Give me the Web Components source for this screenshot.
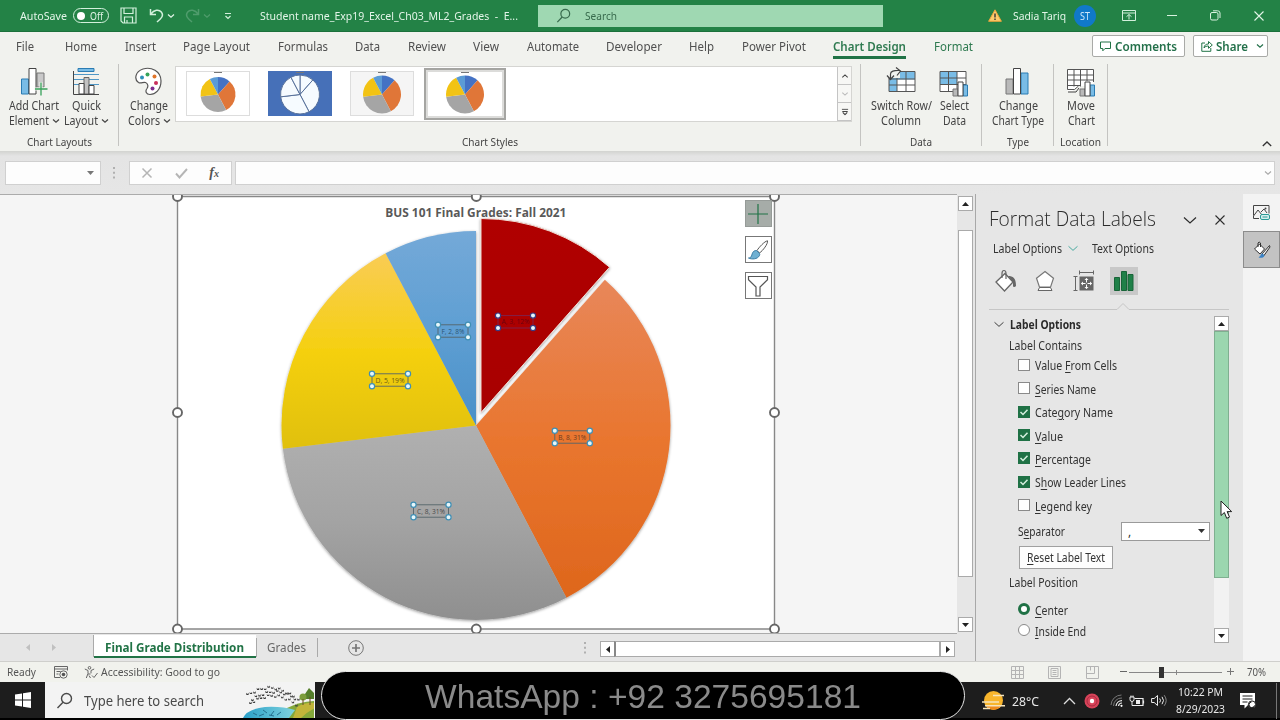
<!DOCTYPE html>
<html lang="en">
<head>
<meta charset="utf-8">
<title>Excel - Final Grade Distribution</title>
<style>
body { margin: 0; width: 1280px; height: 720px; overflow: hidden; font-family: "Noto Sans", "Open Sans", sans-serif; font-size: 12px; color: #444; }
</style>
</head>
<body>
<excel-app></excel-app>
<script>
// every element gets the same box rules, then its own template
function define(name, html, setup) {
  const template = document.createElement("template");
  template.innerHTML = `<style>:host{display:block;box-sizing:border-box} *{box-sizing:border-box}</style>` + html;
  customElements.define(name, class extends HTMLElement {
    constructor() {
      super();
      this.attachShadow({ mode: "open" });
      this.shadowRoot.appendChild(template.content.cloneNode(true));
    }
    connectedCallback() {
      if (setup) setup(this, this.shadowRoot);
    }
  });
}

const bars = `<path d="M1 12h7v15H1z" fill="#b9b9b9" stroke="#777"/><path d="M16 6h7v21h-7z" fill="#79bce6" stroke="#2b7cb3"/><path d="M8.500 1.500h7v25.500h-7z" fill="#fff" stroke="#444"/>`;
const smallBars = `<path d="M14 22h5v7h-5z" fill="#b9b9b9" stroke="#777"/><path d="M24 18h4.500v11H24z" fill="#79bce6" stroke="#2b7cb3"/><path d="M19 15h5v14h-5z" fill="#fff" stroke="#444"/>`;

// name: [width, height, markup]
const icons = {
  save: [17, 17, `<g fill="none" stroke="#d3f0dc" stroke-width="1.200"><path d="M1 1h15v15H3l-2-2z"/><path d="M4 1v5.500h9V1M4.500 16v-6h8v6M7 16v-3"/></g>`],
  undo: [15, 15, `<path d="M1.500 1v5.500H7M1.800 6.200C5 1.500 10 1.200 12.300 4c2 2.600 1 5.200-1 7L8 14" fill="none" stroke="#d3f0dc" stroke-width="1.500"/>`],
  redo: [15, 15, `<path d="M13.500 1v5.500H8M13.200 6.200C10 1.500 5 1.200 2.700 4c-2 2.600-1 5.200 1 7L7 14" fill="none" stroke="#4f9c6c" stroke-width="1.500"/>`],
  chev: [8, 6, `<path d="M1 1.500l3 2.700 3-2.700" fill="none" stroke="currentColor" stroke-width="1.200"/>`],
  custom: [8, 8, `<path d="M1 1.500h6M1.500 4l2.500 2.500L6.500 4" fill="none" stroke="#d3f0dc" stroke-width="1.200"/>`],
  search: [17, 17, `<g fill="none" stroke="currentColor" stroke-width="1.400"><circle cx="10.500" cy="6.500" r="5"/><path d="M7 10.200L1.500 16"/></g>`],
  warning: [14, 13, `<path d="M7 .8L13.400 12.300H.6z" fill="#fccb6c" stroke="#e9a33c"/><path d="M7 4.500v4M7 9.500v1.500" stroke="#333" stroke-width="1.400"/>`],
  ribbon: [14, 11, `<g fill="none" stroke="#d3f0dc"><path d="M.5 .5h13v10H.5zM.5 3h13M7 9.500V4.500M4.500 6.700L7 4.500l2.500 2.200"/></g>`],
  minimize: [10, 10, `<path d="M0 4.500h10" stroke="#d9f2e0"/>`],
  restore: [11, 11, `<g fill="none" stroke="#d9f2e0"><rect x=".5" y="2.500" width="7.500" height="7.500" rx="1.500"/><path d="M3 .8h4.500Q10 .8 10 3v5"/></g>`],
  close: [10, 10, `<path d="M.5 .5l9 9M9.500 .5l-9 9" stroke="currentColor" stroke-width="1.100"/>`],
  comment: [11, 11, `<path d="M.5 1h10v6.500H5L2.800 9.800V7.500H.5z" fill="none" stroke="#217346"/>`],
  share: [12, 12, `<path d="M4 3H.8v8.300h9V8M3 8c.3-3 2-4 4.500-4V1.500L11.300 5 7.500 8.300V6C5.500 6 4 6.500 3 8z" fill="none" stroke="#217346"/>`],
  addElement: [28, 30, `<path d="M1.500 12h7v15h-7z" fill="#79bce6" stroke="#2b7cb3"/><path d="M17 6h7v14h-7z" fill="#c9c9c9" stroke="#777"/><path d="M9 1.500h7v25.500H9z" fill="#fff" stroke="#444"/><path d="M21 15v14M14.500 22h13" stroke="#f1f2ee" stroke-width="3"/><path d="M21 15.500v13M15 22h12.500" stroke="#38a05a" stroke-width="1.300"/>`],
  quickLayout: [28, 30, `<path d="M6 1.500h16v3H6z" fill="#79bce6" stroke="#2b7cb3"/><path d="M2 7.500h25M2 12.500h25M2 17.500h25" stroke="#4f97c6"/><path d="M12 10.500h5V27h-5z" fill="#c2c2c2" stroke="#666"/><path d="M7 16.500h5V27H7zM17 18.500h5V27h-5z" fill="#fff" stroke="#444"/><path d="M1.500 4v23.500H27" fill="none" stroke="#444"/>`],
  palette: [30, 30, `<path d="M4.500 15.500C0 12.500 1 4.500 9 2c8-2.500 18 2 18 12 0 9-6 13.500-11 13.500-4 0-5-3.500-3-6 1.500-2 1-5-1.500-6-2.500-.8-4.500 1.500-7 0z" fill="#fff" stroke="#555" stroke-width="1.200"/><circle cx="8" cy="10.500" r="2" fill="#2d8fb8"/><circle cx="13.500" cy="7.500" r="2" fill="#37a35a"/><circle cx="20.500" cy="9.500" r="2" fill="#e0752a"/><circle cx="22" cy="16" r="2" fill="#c9305c"/><circle cx="18.500" cy="21.500" r="2" fill="#7d2f8f"/>`],
  switchRow: [30, 30, `<path d="M3 4.500h26v20H3z" fill="#fff"/><path d="M3 4.500h26v8H11v12H3z" fill="#79bce6"/><path d="M3 4.500h26v20H3zM11 4.500v20M20 4.500v20M3 12h26M3 18h26" fill="none" stroke="#555"/><path d="M0 0h14v11H0z" fill="#f1f2ee"/><path d="M4.500 12V7q0-4 9.500-3.500M1 8.500L4.500 12.500 8 8.500M10 .5l4.500 3.500-3.500 4.500" fill="none" stroke="#444" stroke-width="1.200"/>`],
  selectData: [30, 30, `<path d="M1 4.500h26v20H1z" fill="#fff"/><path d="M1 4.500h17v13H1z" fill="#79bce6"/><path d="M1 4.500h26v20H1zM9.500 4.500v20M18 4.500v20M1 11h26M1 17.500h26" fill="none" stroke="#555"/>` + smallBars],
  chartType: [26, 30, bars],
  moveChart: [30, 30, `<path d="M1.500 2.500h26v16.500l-16 0-5 5h-5z" fill="#fff"/><path d="M27.500 15V2.500h-26v20h7l4-3.500M8 2.500v17M14.500 2.500v17M21 2.500V14M1.500 8h26M1.500 13h26M1.500 18.500h13" fill="none" stroke="#555"/><path d="M2 25h8l3-4" fill="none" stroke="#444"/>` + smallBars],
  collapse: [10, 6, `<path d="M.8 5l4.200-4 4.200 4" fill="none" stroke="#333" stroke-width="1.300"/>`],
  cross: [12, 12, `<path d="M1.500 1.500l9 9M10.500 1.500l-9 9" stroke="#b5b5b5" stroke-width="1.500"/>`],
  check: [13, 12, `<path d="M1 6.500l3.500 4L12 2" fill="none" stroke="#b5b5b5" stroke-width="1.900"/>`],
  dots: [3, 12, `<path d="M1 0v2M1 4.700v2M1 9.500v2" stroke="#aaa" stroke-width="1.800"/>`],
  down: [7, 4, `<path d="M0 0h7L3.500 4z" fill="currentColor"/>`],
  up: [7, 4, `<path d="M0 4h7L3.500 0z" fill="currentColor"/>`],
  left: [4, 7, `<path d="M4 0v7L0 3.500z" fill="currentColor"/>`],
  right: [4, 7, `<path d="M0 0v7l4-3.500z" fill="currentColor"/>`],
  moreStyles: [8, 8, `<path d="M.5 1h7M1 3.500h6M1.500 4.500l2.500 2.500 2.500-2.500" fill="none" stroke="#444" stroke-width="1.200"/>`],
  wideChev: [14, 9, `<path d="M1 1.500l6 5.500 6-5.500" fill="none" stroke="currentColor" stroke-width="1.200"/>`],
  fill: [24, 24, `<path d="M2 13l9-8.500 8 8.500-8.500 9z" fill="#fff" stroke="#666" stroke-width="1.300"/><path d="M8 9V4.500q0-3 2-3t2 3V10" fill="none" stroke="#666" stroke-width="1.200"/><path d="M14 7c5 0 8 2 8 10-1.500 2-3 1-3-.5V13z" fill="#666"/>`],
  effects: [22, 24, `<path d="M11 2.500l8.500 6.700-3 9H5.500l-3-9z" fill="#fff" stroke="#777" stroke-width="1.200"/><path d="M5.500 18.500h11L18 21.500H4z" fill="#fff" stroke="#666"/>`],
  size: [22, 22, `<path d="M2.500 6v15M.5 6.500h4M.5 20.500h4M7 2.500h13M6.500.5v4M20.500.5v4" fill="none" stroke="#666"/><path d="M6.500 6.500h14v14h-14z" fill="#666"/><path d="M13.500 8.500v10M8.500 13.500h10" stroke="#fff" stroke-dasharray="4 2"/><path d="M11.500 10l2-2 2 2zM11.500 17l2 2 2-2zM10 11.500l-2 2 2 2zM17 11.500l2 2-2 2z" fill="#fff"/>`],
  barsGreen: [20, 22, `<path d="M.5 7.500h5v13h-5zM7.500 1.500h5v19h-5zM14 4.500h5v16h-5z" fill="#1f8048" stroke="#186438"/>`],
  altText: [18, 16, `<path d="M.5 10.500v-10h15.500v8M.5 11L5 5l4 5M.5 11v2.500H6M8 7l3-3 3 4" fill="none" stroke="#444"/><circle cx="12.500" cy="3.500" r="1" fill="#444"/><rect x="7.500" y="9.500" width="9" height="5" rx="1.500" fill="#d8f0ee" stroke="#2a9a96"/><path d="M9.500 12h5" stroke="#2a9a96"/>`],
  paintFormat: [18, 18, `<path d="M1.500 8l5-5 5 5-4.500 5z" fill="#fff" stroke="#333"/><path d="M5 6V2q1-2 2.500 0v4" fill="none" stroke="#333"/><path d="M16.500 4.500L9 13l1.800 1.800L17 6z" fill="#eee" stroke="#333"/><path d="M9.500 12.500c-2 0-1.500 2.500-4 4 3.500.8 5.500 0 6-2.300z" fill="#3c82c4"/>`],
  plus: [20, 20, `<path d="M10 0v20M0 10h20" stroke="#217346" stroke-width="1.200"/>`],
  brush: [22, 20, `<path d="M20.500.8c-3 .5-8.500 6.500-10.500 9.700l2.500 2.500c3.500-2.500 8.500-9 8-12.200z" fill="#fff" stroke="#555"/><path d="M9.500 10.500c-4 0-4 3-5 5.500-.5 1.500-2 2-3 2 3 1.500 9 1.500 11-2.500.5-1.200.2-2-.5-2.700z" fill="#6fb0d2" stroke="#3a7ca5"/>`],
  funnel: [22, 22, `<path d="M1.500 1.500h19v3.300L13 12v9H9v-9L1.500 4.800z" fill="#fff" stroke="#555" stroke-width="1.200"/>`],
  addSheet: [16, 16, `<g fill="none" stroke="#777"><circle cx="8" cy="8" r="7.300"/><path d="M8 4v8M4 8h8" stroke-width="1.700"/></g>`],
  macro: [15, 13, `<g fill="none" stroke="#666"><path d="M.5 11.500V.5h13v4M.5 3h13M2.500 5.500h4M2.500 8h2M.5 11.500H6"/><circle cx="9.500" cy="8.500" r="3.700"/></g><circle cx="9.500" cy="8.500" r="1.800" fill="#555"/>`],
  access: [14, 13, `<g fill="none" stroke="#666"><circle cx="5.500" cy="1.800" r="1.300"/><path d="M.8 3l3.200 1.500v3L2.300 12M10.200 3L7 4.500v2.800M4 8l2.500 0M6.500 12L5 9.500M8 9.500l2 2 3.500-4.500"/></g>`],
  gridView: [13, 13, `<path d="M.5 .5h12v12H.5zM4.500 .5v12M8.500 .5v12M.5 4.500h12M.5 8.500h12" fill="none" stroke="#b4b4b4"/>`],
  pageView: [13, 13, `<path d="M.5 .5h12v12H.5zM3 2.500h7v8H3zM4.500 4.500h4M4.500 6.500h4M4.500 8.500h4" fill="none" stroke="#b4b4b4"/>`],
  breakView: [13, 13, `<path d="M.5 .5h12v12H.5zM.5 7.500h8v-7M4.500 .5v4" fill="none" stroke="#b4b4b4"/>`],
  windows: [16, 16, `<path d="M0 2.500L7 1.500V7.500H0zM8 1.300L16 0v7.500H8zM0 8.500h7v6l-7-1zM8 8.500h8V16l-8-1.300z" fill="#fff"/>`],
  weather: [24, 22, `<circle cx="12.500" cy="10.500" r="9.500" fill="#f8b52c"/><path d="M5 16a9.500 9.500 0 0 0 15 0z" fill="#ee8a1d"/><path d="M1 12h17M4 15.700h20M12 5.500h11M2 18.500h7" stroke="#f5e4bd" stroke-width="1.500"/>`],
  caret: [13, 8, `<path d="M1 7l5.500-5.500L12 7" fill="none" stroke="#ddd" stroke-width="1.300"/>`],
  record: [16, 16, `<circle cx="8" cy="8" r="7.500" fill="#d8445a"/><circle cx="8" cy="8" r="5" fill="none" stroke="#a82a40"/><circle cx="8" cy="8" r="2.200" fill="#fff"/>`],
  wifi: [13, 13, `<g fill="none"><path d="M1 11A10.500 10.500 0 0 1 11.500 1M3.500 12A8 8 0 0 1 12 4" stroke="#777"/><path d="M6 12a6 6 0 0 1 6-5.300M8.500 12a3.500 3.500 0 0 1 3.500-3" stroke="#eee" stroke-width="1.200"/></g><circle cx="11.500" cy="11.800" r="1.100" fill="#fff"/>`],
  battery: [16, 12, `<path d="M5.500 3.500h8.500v7H4M14.500 5.500v3" fill="none" stroke="#eee" stroke-width="1.200"/><path d="M7 5h4v4H7z" fill="#eee"/><path d="M1 2v2.500q0 2 2 2t2-2V2zM2 .5V2M4 .5V2M3 6.500v4h2" fill="none" stroke="#eee"/>`],
  speaker: [16, 13, `<path d="M.6 4.500h2.600L6.500 1.500v10L3.200 8.500H.6z" fill="none" stroke="#eee"/><path d="M8.700 4.500q1.600 2 0 4M11 2.800q3 3.700 0 7.400" fill="none" stroke="#eee"/><path d="M13.200 1.200q4 5.300 0 10.600" fill="none" stroke="#888"/>`],
  notify: [16, 16, `<path d="M0 0h15v12h-7l-3.500 3.500V12H0z" fill="#fff"/><path d="M2.500 3h10M2.500 6h10M2.500 9h5" stroke="#1d1d1d"/><circle cx="12" cy="11.500" r="3.600" fill="#fff" stroke="#1d1d1d"/><path d="M11.500 9a2.800 2.800 0 1 0 3 3.500" fill="none" stroke="#1d1d1d"/>`],
  cursor: [13, 20, `<path d="M1 1v14.500l3.400-3 2.300 5.800 2.800-1.200-2.400-5.500h4.600z" fill="#fff" stroke="#222"/>`],
  birds: [71, 36, ""]
};
// birds over a lake
{
  let flock = "";
  for (let i = 0; i < 42; i++) {
    const t = (i % 14) / 13, row = Math.floor(i / 14);
    const x = 3 + t * 46 + (row * 5) % 7, y = 13 - Math.sin(t * 2.6 + .2) * 11 + row * 4 + t * 3 + (i % 3);
    flock += `<path d="M${x.toFixed(1)} ${y.toFixed(1)}l1.300 1.300 1.300-1.300v2.200h-2.200z" fill="#3b3b3b"/>`;
  }
  icons.birds[2] = `<defs><linearGradient id="lake"><stop offset="0" stop-color="#2a9fc8"/><stop offset="1" stop-color="#7fd3de"/></linearGradient></defs>
    <path d="M44 26q12-6 28-7v17H40z" fill="#84a83a"/><path d="M54 25q9-5 18-4v5q-8 4-14 10h-8z" fill="#c2b53a"/>
    <path d="M0 36q4-9 22-11 16-1 30 3l-6 8z" fill="url(#lake)"/><path d="M10 31l4 2M20 28l4 3M31 29l-3 4M38 30l-4 3M16 34l5-2M26 33l5 1" stroke="#26718f"/>
    <path d="M66 6l5 5v6h-9v-5z" fill="#557f2b"/><circle cx="60" cy="15" r="3.500" fill="#7d9d3c"/><path d="M67 15v8M60 17v6" stroke="#6b4a24"/>${flock}`;
}

define("ui-icon", `<style>:host{display:inline-block;line-height:0;flex:none} svg{display:block}</style><span></span>`, (el, root) => {
  const [w, h, body] = icons[el.getAttribute("name")];
  root.querySelector("span").innerHTML = `<svg width="${w}" height="${h}" viewBox="0 0 ${w} ${h}">${body}</svg>`;
});

define("title-bar", `
<style>
:host { height: 32px; background: #238246; color: #e3f5e8; font-size: 11.500px; border-bottom: 1px solid #1c713b; }
.bar { display: grid; height: 31px; align-items: center; justify-items: start;
  grid-template-columns: 53px 47px 29px 18px 18px 18px 21px 36px 278px 450px 25px 61px 48px 45px 43px 44px 20px; padding-left: 20px; }
.toggle { width: 36px; height: 15px; border: 1px solid #d3f0dc; border-radius: 8px; display: flex; align-items: center; justify-content: space-between; padding: 0 5px 0 3px; font-size: 10px; }
.toggle i { width: 8px; height: 8px; border-radius: 50%; background: #fff; }
.search { width: 345px; height: 22px; background: #9fd8b2; color: #386b4d; display: flex; align-items: center; gap: 13px; padding-left: 17px; }
.search ui-icon { scale: .88; }
.st { width: 22px; height: 22px; border-radius: 50%; background: #1079c9; color: #cfe8fb; display: grid; place-items: center; font-size: 10px; }
.dim { color: #4f9c6c; }
</style>
<div class="bar">
  <ui-text w="47">AutoSave</ui-text>
  <div class="toggle"><i></i><ui-text w="13">Off</ui-text></div>
  <ui-icon name="save"></ui-icon>
  <ui-icon name="undo"></ui-icon><ui-icon name="chev"></ui-icon>
  <ui-icon name="redo"></ui-icon><ui-icon name="chev" class="dim"></ui-icon>
  <ui-icon name="custom"></ui-icon>
  <ui-text w="258">Student name_Exp19_Excel_Ch03_ML2_Grades&nbsp; - &nbsp;E...</ui-text>
  <div class="search"><ui-icon name="search"></ui-icon><ui-text w="32">Search</ui-text></div>
  <ui-icon name="warning"></ui-icon>
  <ui-text w="53">Sadia Tariq</ui-text>
  <div class="st"><ui-text w="10">ST</ui-text></div>
  <ui-icon name="ribbon"></ui-icon><ui-icon name="minimize"></ui-icon><ui-icon name="restore"></ui-icon><ui-icon name="close"></ui-icon>
</div>`);

define("ribbon-tabs", `
<style>
:host { height: 31px; display: flex; align-items: flex-start; justify-content: space-between; padding: 3px 12px 0 16px; color: #505050; }
nav { display: flex; gap: 27.400px; height: 26px; padding-top: 3px; }
.green { color: #2f7a50; }
.active { font-weight: 600; border-bottom: 3px solid #217346; height: 21px; }
.right { display: flex; gap: 8px; color: #23704a; font-weight: 600; font-size: 12px; }
.right div { height: 22px; background: #fff; border: 1px solid #a9aaa7; border-radius: 2px; display: flex; align-items: center; padding-left: 7px; gap: 4px; }
.c { width: 93px; } .s { width: 75px; }
.s ui-text { margin-left: -1px; }
.s ui-icon:last-child { margin-left: 4px; }
</style>
<nav>
  <ui-text w="18" style="margin-right:4px">File</ui-text><ui-text w="32">Home</ui-text><ui-text w="31">Insert</ui-text><ui-text w="67" style="margin-right:.5px">Page Layout</ui-text>
  <ui-text w="50">Formulas</ui-text><ui-text w="25">Data</ui-text><ui-text w="38">Review</ui-text><ui-text w="26">View</ui-text>
  <ui-text w="52">Automate</ui-text><ui-text w="56">Developer</ui-text><ui-text w="25">Help</ui-text><ui-text w="64">Power Pivot</ui-text>
  <ui-text w="73" class="green active">Chart Design</ui-text><ui-text w="39" class="green">Format</ui-text>
</nav>
<div class="right">
  <div class="c"><ui-icon name="comment"></ui-icon><ui-text w="62">Comments</ui-text></div>
  <div class="s"><ui-icon name="share"></ui-icon><ui-text w="32">Share</ui-text><ui-icon name="chev"></ui-icon></div>
</div>`);

define("ribbon-group", `
<style>
:host { position: relative; height: 82px; border-right: 1px solid #c4c4c1; display: flex; flex-direction: column; justify-content: space-between; }
.items { display: flex; }
.name { font-size: 11px; text-align: center; line-height: 14px; margin-bottom: -3px; height: 14px; }
</style>
<div class="items"><slot></slot></div><div class="name"><slot name="label"></slot></div>`);

define("ribbon-button", `
<style>
:host { display: flex; flex-direction: column; align-items: center; line-height: 15px; padding-top: 3px; }
.icon { height: 31px; }
.line { display: flex; align-items: center; gap: 3px; height: 15px; white-space: nowrap; }
</style>
<div class="icon"></div><div class="line"><slot name="a"></slot></div><div class="line"><slot name="b"></slot></div>`, (el, root) => {
  root.querySelector(".icon").innerHTML = `<ui-icon name="${el.getAttribute("icon")}"></ui-icon>`;
  if (el.hasAttribute("menu")) root.querySelectorAll(".line")[1].insertAdjacentHTML("beforeend", `<ui-icon name="chev"></ui-icon>`);
});

function slicePath(cx, cy, r, from, to) {
  const point = (deg) => {
    const a = deg * Math.PI / 180;
    return (cx + r * Math.sin(a)).toFixed(2) + " " + (cy - r * Math.cos(a)).toFixed(2);
  };
  return `M${cx} ${cy}L${point(from)}A${r} ${r} 0 0 1 ${point(to)}Z`;
}
const angles = [0, 41.500, 152.300, 263.100, 332.300, 360];

define("style-thumb", `
<style>
:host { width: 64px; height: 45px; border: 1px solid #ddd; background: #fff; line-height: 0; }
:host([kind="blue"]) { background: #4670b8; border-color: #4670b8; }
:host([kind="gray"]) { background: #f5f5f5; }
:host([selected]) { width: 82px; height: 52px; border: 2px solid #a5a5a2; padding: 2px 8px; background: #fff; box-shadow: inset 0 0 0 2px #dcdcda; }
</style><div></div>`, (el, root) => {
  const blue = el.getAttribute("kind") === "blue";
  const colors = ["#4472c4", "#e07638", "#a5a5a5", "#f2c314", "#5b9bd5"];
  const r = blue ? 19.500 : el.getAttribute("kind") === "plain" ? 17.500 : 19;
  let parts = "";
  for (let i = 0; i < 5; i++)
    parts += `<path d="${slicePath(31, 22.500, r, angles[i], angles[i + 1])}" fill="${blue ? "#f6fbff" : colors[i]}" ${blue ? 'stroke="#58719a"' : ""}/>`;
  root.querySelector("div").innerHTML = `<svg width="62" height="43" viewBox="0 0 62 43"><path d="M27 .5h8" stroke="#777"/>${parts}</svg>`;
});

define("ribbon-body", `
<style>
:host { height: 88px; display: grid; grid-template-columns: 119px 742px 121px 72px 54px 1fr; padding-top: 1px; }
.gallery { display: flex; margin-left: 3px; margin-top: 2px; width: 677px; height: 56px; background: #fff; border: 1px solid #d5d5d2; padding-left: 10px; }
.gallery style-thumb { margin: 4px 18px 0 0; flex: none; }
.gallery style-thumb[selected] { margin: 1px 0 0 -8px; }
.gallery .steps { margin-left: auto; width: 14px; display: grid; grid-template-rows: 18px 18px 18px; border-left: 1px solid #c4c4c4; color: #444; }
.steps div { display: grid; place-items: center; border-bottom: 1px solid #c4c4c4; background: #f7f7f5; }
.steps ui-icon { scale: .9; }
.flip { transform: rotate(180deg); }
.end { display: flex; justify-content: flex-end; align-items: flex-end; padding: 0 8px 4px 0; }
</style>
<ribbon-group>
  <ribbon-button icon="addElement" menu style="width:50px;margin-left:9px"><ui-text slot="a" w="50">Add Chart</ui-text><ui-text slot="b" w="40">Element</ui-text></ribbon-button>
  <ribbon-button icon="quickLayout" menu style="width:46px;margin-left:4px"><ui-text slot="a" w="29">Quick</ui-text><ui-text slot="b" w="34">Layout</ui-text></ribbon-button>
  <ui-text slot="label" w="65">Chart Layouts</ui-text>
</ribbon-group>
<ribbon-group>
  <ribbon-button icon="palette" menu style="width:46px;margin-left:7px"><ui-text slot="a" w="38">Change</ui-text><ui-text slot="b" w="32">Colors</ui-text></ribbon-button>
  <div class="gallery">
    <style-thumb kind="plain"></style-thumb><style-thumb kind="blue"></style-thumb><style-thumb kind="gray"></style-thumb><style-thumb selected></style-thumb>
    <div class="steps"><div><ui-icon name="chev" class="flip"></ui-icon></div><div style="color:#bbb"><ui-icon name="chev"></ui-icon></div><div><ui-icon name="moreStyles"></ui-icon></div></div>
  </div>
  <ui-text slot="label" w="56">Chart Styles</ui-text>
</ribbon-group>
<ribbon-group>
  <ribbon-button icon="switchRow" style="width:62px;margin-left:9px"><ui-text slot="a" w="61">Switch Row/</ui-text><ui-text slot="b" w="40">Column</ui-text></ribbon-button>
  <ribbon-button icon="selectData" style="width:30px;margin-left:7px"><ui-text slot="a" w="29">Select</ui-text><ui-text slot="b" w="23">Data</ui-text></ribbon-button>
  <ui-text slot="label" w="22">Data</ui-text>
</ribbon-group>
<ribbon-group>
  <ribbon-button icon="chartType" style="width:54px;margin-left:9px"><ui-text slot="a" w="39">Change</ui-text><ui-text slot="b" w="52">Chart Type</ui-text></ribbon-button>
  <ui-text slot="label" w="22">Type</ui-text>
</ribbon-group>
<ribbon-group>
  <ribbon-button icon="moveChart" style="width:30px;margin-left:12px"><ui-text slot="a" w="28">Move</ui-text><ui-text slot="b" w="27">Chart</ui-text></ribbon-button>
  <ui-text slot="label" w="41">Location</ui-text>
</ribbon-group>
<div class="end"><ui-icon name="collapse"></ui-icon></div>`);

define("formula-bar", `
<style>
:host { height: 43px; background: linear-gradient(#d2d3d0, #e4e4e4 5px, #e6e6e6); display: flex; align-items: flex-start; padding: 10px 5px 0; }
.box { height: 24px; background: #fdfdfd; border: 1px solid #d0d0d0; display: flex; align-items: center; justify-content: flex-end; }
.name { width: 96px; padding-right: 6px; color: #777; }
.dots { margin: 6px 13px 0 12px; }
.fx { width: 103px; justify-content: space-between; padding: 0 12px 0 11px; }
.fx i { font: italic bold 14px "Liberation Serif", serif; color: #555; }
.fx small { font-size: 10px; }
.input { flex: 1; margin-left: 3px; padding-right: 2px; color: #aaa; }
</style>
<div class="box name"><ui-icon name="down"></ui-icon></div>
<ui-icon class="dots" name="dots"></ui-icon>
<div class="box fx"><ui-icon name="cross"></ui-icon><ui-icon name="check"></ui-icon><i>f<small>x</small></i></div>
<div class="box input"><ui-icon name="chev"></ui-icon></div>`);

define("grade-chart", `
<style>
:host { position: relative; background: #f5f5f5; width: 957px; height: 440px; overflow: hidden; border-top: 1px solid #ababab; border-bottom: 1px solid #ababab; }
svg.plot { display: block; }
text { font-family: "Open Sans", "Noto Sans", sans-serif; }
.tools { position: absolute; left: 744.500px; top: 5px; display: flex; flex-direction: column; gap: 9px; }
.tools div { width: 27px; height: 27px; border: 1px solid #777; background: #fff; display: grid; place-items: center; }
.tools div:first-child { background: #a6aca8; border-color: #969b98; }
</style>
<svg class="plot" width="957" height="439" viewBox="0 195 957 439"></svg>
<div class="tools"><div><ui-icon name="plus"></ui-icon></div><div><ui-icon name="brush"></ui-icon></div><div><ui-icon name="funnel"></ui-icon></div></div>`, (el, root) => {
  const grads = [["a", "#b00000", "#a80000"], ["b", "#e8875a", "#de661c"], ["c", "#b0b0b0", "#8f8f8f"], ["d", "#f9cc55", "#e0c010"], ["f", "#74a9d8", "#4a90c8"]];
  let svg = `<defs>`;
  for (const [id, top, bottom] of grads)
    svg += `<linearGradient id="${id}" x1="0" y1="0" x2="0" y2="1"><stop offset="0" stop-color="${top}"/><stop offset=".5" stop-color="${{ a: "#ac0000", b: "#e9762f", c: "#a3a3a3", d: "#f5d010", f: "#5f9fd3" }[id]}"/><stop offset="1" stop-color="${bottom}"/></linearGradient>`;
  svg += `<filter id="shade" x="-10%" y="-10%" width="120%" height="120%"><feDropShadow dx="0" dy="1" stdDeviation="1.600" flood-color="#000" flood-opacity=".4"/></filter></defs>`;
  svg += `<path d="M177.500 196.500h597V629h-597z" fill="#fff" stroke="#888" stroke-width="1.400"/>`;
  svg += `<text x="475.800" y="217" font-size="12" font-weight="700" fill="#595959" text-anchor="middle" textLength="181" lengthAdjust="spacingAndGlyphs">BUS 101 Final Grades: Fall 2021</text>`;
  svg += `<g filter="url(#shade)">`;
  for (let i = 1; i < 5; i++)
    svg += `<path d="${slicePath(476, 425.500, 194.500, angles[i], angles[i + 1])}" fill="url(#${grads[i][0]})"/>`;
  svg += `</g><path filter="url(#shade)" d="${slicePath(481, 412.500, 194, 0, 41.500)}" fill="url(#a)" stroke="#f0dcd2" stroke-width="1"/>`;
  const labels = [["F, 2, 8%", 453, 331, 30, "#2c5673"], ["A, 3, 12%", 515.500, 321.800, 35, "#6c0010"], ["D, 5, 19%", 390, 380, 36, "#6b5a14"], ["B, 8, 31%", 572.300, 437, 35, "#6e3b20"], ["C, 8, 31%", 431, 511, 35, "#4a4a4a"]];
  for (const [text, x, y, w, color] of labels) {
    const red = text[0] === "A";
    const l = x - w / 2, t = y - 6.200;
    svg += `<rect x="${l}" y="${t}" width="${w}" height="12.400" fill="none" stroke="${red ? "#7d2450" : "#55656a"}" stroke-width=".9"/>`;
    svg += `<text x="${x}" y="${y + 2.600}" font-size="6.800" fill="${color}" text-anchor="middle" textLength="${w - 7}" lengthAdjust="spacingAndGlyphs">${text}</text>`;
    for (const px of [l, l + w]) for (const py of [t, t + 12.400])
      svg += `<circle cx="${px}" cy="${py}" r="2.600" fill="#e6f7fb" stroke="${red ? "#3a3a80" : "#3f8fb5"}" stroke-width="1.200"/>`;
  }
  for (const [x, y] of [[177.500, 196.500], [476.300, 196.500], [774.500, 196.500], [177.500, 412.500], [774.500, 412.500], [177.500, 629], [476.300, 629], [774.500, 629]])
    svg += `<circle cx="${x}" cy="${y}" r="4.500" fill="#fff" stroke="#666" stroke-width="1.900"/>`;
  root.querySelector(".plot").innerHTML = svg;
});

define("scroll-bar", `
<style>
:host { display: flex; flex-direction: column; width: 15px; color: #222; }
:host([horizontal]) { flex-direction: row; width: 355px; height: 16px; }
.btn { width: 15px; height: 15px; border: 1px solid #aaa; background: #fff; display: grid; place-items: center; flex: none; }
:host([horizontal]) .btn { height: 16px; }
.thumb { flex: none; background: var(--thumb, #fff); border: 1px solid var(--edge, #aaa); height: var(--size); margin-top: var(--start, 0); }
:host([horizontal]) .thumb { height: 16px; flex: 1; margin: 0 0 0 -1px; border-left: 2px solid #888; }
.rest { flex: 1; background: var(--track, transparent); }
:host([horizontal]) .rest { display: none; }
</style>
<div class="btn"><ui-icon id="first" name="up"></ui-icon></div><div class="thumb"></div><div class="rest"></div><div class="btn"><ui-icon id="last" name="down"></ui-icon></div>`, (el, root) => {
  if (el.hasAttribute("horizontal")) {
    root.querySelectorAll(".btn")[0].innerHTML = `<ui-icon name="left"></ui-icon>`;
    root.querySelectorAll(".btn")[1].innerHTML = `<ui-icon name="right"></ui-icon>`;
  }
});

define("sheet-tabs", `
<style>
:host { height: 26px; display: flex; align-items: flex-start; background: #e6e6e6; color: #666; font-size: 13px; }
.nav { width: 94px; height: 22px; display: flex; gap: 22px; align-items: center; padding: 3px 0 0 26px; color: #c0c0c0; border-right: 1px solid #aaa; }
.active { width: 162px; height: 23px; background: #fff; border-bottom: 2px solid #217346; color: #217346; font-weight: 700; display: flex; justify-content: center; align-items: center; padding: 2px 2px 0 0; }
.tab { width: 62px; height: 19px; margin-top: 3px; padding: 0 0 2px 10px; border-left: 1px solid #aaa; border-right: 1px solid #aaa; display: flex; align-items: center; }
</style>
<div class="nav"><ui-icon name="left"></ui-icon><ui-icon name="right"></ui-icon></div>
<div class="active"><ui-text w="139">Final Grade Distribution</ui-text></div>
<div class="tab"><ui-text w="39">Grades</ui-text></div>
<ui-icon name="addSheet" style="margin:5px 0 0 30px"></ui-icon>
<ui-icon name="dots" style="margin:7px 0 0 220px"></ui-icon>
<scroll-bar horizontal style="margin:6px 0 0 13px"></scroll-bar>`);

define("check-row", `
<style>
:host { height: 23.450px; display: flex; align-items: center; gap: 5px; padding-left: 29px; }
i { width: 12px; height: 12px; border: 1px solid #8a8a8a; background: #fff; margin-bottom: 2px; line-height: 0; }
:host([checked]) i { background: #1f7145; border-color: #1f7145; }
:host(:not([checked])) svg { display: none; }
:host([radio]) i { border-radius: 50%; }
:host([radio][checked]) i { background: #fff; border: 3.500px solid #1f7145; }
:host([radio]) svg { display: none; }
</style>
<i><svg width="10" height="10" viewBox="0 0 10 10"><path d="M1.500 5l2.500 2.500L8.500 2.700" fill="none" stroke="#d5f0de" stroke-width="1.500"/></svg></i><slot></slot>`);

define("format-pane", `
<style>
:host { width: 268px; height: 467px; background: #e6e6e6; border-left: 1px solid #a8a8a8; padding: 0 14px 0 13px; overflow: hidden; color: #333; font-size: 12px; }
.head { display: flex; align-items: center; height: 49px; font: 300 20px "Open Sans", "Noto Sans", sans-serif; color: #2c2c2c; }
.head ui-icon:nth-of-type(1) { margin: 4px 0 0 27px; } .head ui-icon:nth-of-type(2) { margin: 3px 0 0 18px; }
.modes { display: flex; align-items: center; height: 11px; padding-left: 4px; }
.kinds { display: flex; align-items: center; height: 30px; margin-top: 12px; padding-left: 5px; }
.on { width: 28px; height: 28px; background: #c8c8c8; display: grid; place-items: center; margin-left: 15px; }
.rule { display: block; margin-top: 4px; }
.body { display: flex; justify-content: space-between; height: 327px; margin-top: 4px; }
.sec { font-weight: 700; display: flex; gap: 6px; align-items: center; height: 16px; padding-left: 6px; color: #2b2b2b; }
.sub { padding-left: 20px; height: 16px; display: flex; align-items: center; }
.sep { display: flex; justify-content: space-between; align-items: center; width: 221px; padding-left: 29px; height: 18px; margin-top: 4px; }
.combo { width: 89px; height: 19px; background: #fff; border: 1px solid #9a9a9a; display: flex; justify-content: space-between; align-items: center; padding: 0 4px 0 6px; }
button { display: block; font: inherit; color: inherit; margin: 6px 0 0 30px; width: 94px; height: 23px; border: 1px solid #a0a0a0; background: #fdfdfd; padding: 0 7px; text-align: left; }
</style>
<div class="head"><ui-text w="167">Format Data Labels</ui-text><ui-icon name="wideChev"></ui-icon><ui-icon name="close"></ui-icon></div>
<div class="modes"><ui-text w="69">Label Options</ui-text><ui-icon name="wideChev" style="color:#35a397;scale:.75;margin:0 12px 0 4px"></ui-icon><ui-text w="62">Text Options</ui-text></div>
<div class="kinds"><ui-icon name="fill"></ui-icon><ui-icon name="effects" style="margin-left:16px"></ui-icon><ui-icon name="size" style="margin-left:17px"></ui-icon><div class="on"><ui-icon name="barsGreen"></ui-icon></div></div>
<svg class="rule" width="240" height="12" viewBox="0 0 240 12"><path d="M0 9.500h128l6-6 6 6h100" fill="none" stroke="#c6c6c6"/></svg>
<div class="body">
  <div>
    <div class="sec"><ui-icon name="wideChev" style="scale:.75;margin:0 -2px 0 -3px"></ui-icon><ui-text w="71">Label Options</ui-text></div>
    <div class="sub" style="margin:5px 0 1px"><ui-text w="73">Label Contains</ui-text></div>
    <check-row><ui-text w="82">Value <u>F</u>rom Cells</ui-text></check-row>
    <check-row><ui-text w="61"><u>S</u>eries Name</ui-text></check-row>
    <check-row checked><ui-text w="78">Cate<u>g</u>ory Name</ui-text></check-row>
    <check-row checked><ui-text w="28"><u>V</u>alue</ui-text></check-row>
    <check-row checked><ui-text w="56"><u>P</u>ercentage</ui-text></check-row>
    <check-row checked><ui-text w="91">S<u>h</u>ow Leader Lines</ui-text></check-row>
    <check-row><ui-text w="57"><u>L</u>egend key</ui-text></check-row>
    <div class="sep"><ui-text w="47">S<u>e</u>parator</ui-text><div class="combo"><ui-text>,</ui-text><ui-icon name="down"></ui-icon></div></div>
    <button><ui-text w="78"><u>R</u>eset Label Text</ui-text></button>
    <div class="sub" style="margin:5px 0 9px"><ui-text w="69">Label Position</ui-text></div>
    <check-row radio checked style="height:22px"><ui-text w="33"><u>C</u>enter</ui-text></check-row>
    <check-row radio style="height:20px"><ui-text w="51"><u>I</u>nside End</ui-text></check-row>
  </div>
  <scroll-bar style="--thumb:#9bd6af;--edge:#7faf90;--size:247px;--track:#f2f2f2"></scroll-bar>
</div>`);

define("side-rail", `
<style>
:host { background: #f3f3f3; height: 467px; width: 37px; }
div { height: 37px; display: grid; place-items: center; }
.on { background: #c3c3c3; border: 1px solid #8c8c8c; }
</style><div><ui-icon name="altText"></ui-icon></div><div class="on"><ui-icon name="paintFormat"></ui-icon></div>`);

define("status-bar", `
<style>
:host { height: 21px; background: #f1f2ed; border-top: 1px solid #cfcfcc; color: #555; font-size: 10.500px; }
.bar { display: grid; height: 20px; align-items: center; justify-items: start; padding-left: 7px;
  grid-template-columns: 47px 30px 17px 910px 37px 38px 34px 9px 98px 20px 30px; }
.line { width: 93px; height: 11px; }
</style>
<div class="bar">
  <ui-text w="29">Ready</ui-text><ui-icon name="macro"></ui-icon><ui-icon name="access"></ui-icon><ui-text w="119">Accessibility: Good to go</ui-text>
  <ui-icon name="gridView"></ui-icon><ui-icon name="pageView"></ui-icon><ui-icon name="breakView"></ui-icon>
  <svg width="8" height="8"><path d="M0 3.500h7" stroke="#666"/></svg>
  <svg class="line" viewBox="0 0 93 11"><path d="M0 5.500h93M47.500 3v5" stroke="#888"/><path d="M30 0h5v11h-5z" fill="#333"/></svg>
  <svg width="8" height="8"><path d="M0 3.500h7M3.500 0v7" stroke="#777"/></svg>
  <ui-text w="19">70%</ui-text>
</div>`);

define("task-bar", `
<style>
:host { height: 38px; background: #1d1d1d; border-bottom: 2px solid #000; color: #e8e8e8; }
.bar { display: flex; height: 37px; align-items: center; }
.win { width: 45px; padding: 3px 0 0 15px; }
.search { width: 270px; flex: none; height: 36px; background: #f3f3f3; color: #4a4a4a; display: flex; align-items: center; padding-left: 11px; font-size: 14px; align-self: flex-start; overflow: hidden; }
.search ui-text { margin: 0 39px 0 11px; }
.tray { display: grid; align-items: center; justify-items: start; grid-template-columns: 31px 51px 21px 26px 19px 22px 24px 65px 36px 4px; margin-left: 666px; height: 36px; }
.clock { display: flex; flex-direction: column; align-items: center; width: 51px; font-size: 11px; line-height: 16.500px; }
.peek { width: 1px; height: 36px; background: #777; }
</style>
<div class="bar">
  <div class="win"><ui-icon name="windows"></ui-icon></div>
  <div class="search"><ui-icon name="search"></ui-icon><ui-text w="120">Type here to search</ui-text><ui-icon name="birds"></ui-icon></div>
  <div class="tray">
    <ui-icon name="weather"></ui-icon><ui-text w="27" style="font-size:13px">28°C</ui-text><ui-icon name="caret"></ui-icon><ui-icon name="record"></ui-icon>
    <ui-icon name="wifi"></ui-icon><ui-icon name="battery"></ui-icon><ui-icon name="speaker"></ui-icon>
    <div class="clock"><ui-text w="45">10:22 PM</ui-text><ui-text w="49">8/29/2023</ui-text></div>
    <ui-icon name="notify"></ui-icon><div class="peek"></div>
  </div>
</div>`);

define("contact-banner", `
<style>
:host { position: absolute; left: 321px; top: 671px; width: 644px; height: 49px; border-radius: 25px; background: #000; border: 1px solid #e8e8e8; display: flex; justify-content: center; align-items: center; font: 34px "Liberation Sans", Arial, sans-serif; color: #8a8a8a; padding: 1px 1px 0 0; }
</style><ui-text w="436"><slot></slot></ui-text>`);

define("excel-app", `
<style>
:host { position: relative; width: 1280px; height: 720px; overflow: hidden; background: #e6e6e6; }
.ribbon { background: #f1f2ee; height: 119px; }
.work { display: grid; grid-template-columns: 975px 268px 37px; height: 467px; }
.view { display: flex; height: 441px; }
.view scroll-bar { height: 436px; margin: 2px 0 0 1px; --start: 19px; --size: 347px; }
ui-icon.pointer { position: absolute; left: 1219.500px; top: 499.500px; }
</style>
<title-bar></title-bar>
<div class="ribbon"><ribbon-tabs></ribbon-tabs><ribbon-body></ribbon-body></div>
<formula-bar></formula-bar>
<div class="work">
  <div><div class="view"><grade-chart></grade-chart><scroll-bar></scroll-bar></div><sheet-tabs></sheet-tabs></div>
  <format-pane></format-pane>
  <side-rail></side-rail>
</div>
<status-bar></status-bar>
<task-bar></task-bar>
<contact-banner>WhatsApp : +92 3275695181</contact-banner>
<ui-icon class="pointer" name="cursor"></ui-icon>`);

// text scaled sideways to the width in w; defined last so its parents are laid out
define("ui-text", `<style>:host{display:inline-block;white-space:nowrap;flex:none} span{display:inline-block;white-space:nowrap;transform-origin:0 50%} ::slotted(u){text-underline-offset:2px}</style><span><slot></slot></span>`, (el, root) => {
  const want = Number(el.getAttribute("w"));
  if (!want) return;
  const span = root.querySelector("span");
  const natural = span.getBoundingClientRect().width;
  el.style.width = want + "px";
  span.style.transform = `scaleX(${want / natural})`;
});
</script>
</body>
</html>
